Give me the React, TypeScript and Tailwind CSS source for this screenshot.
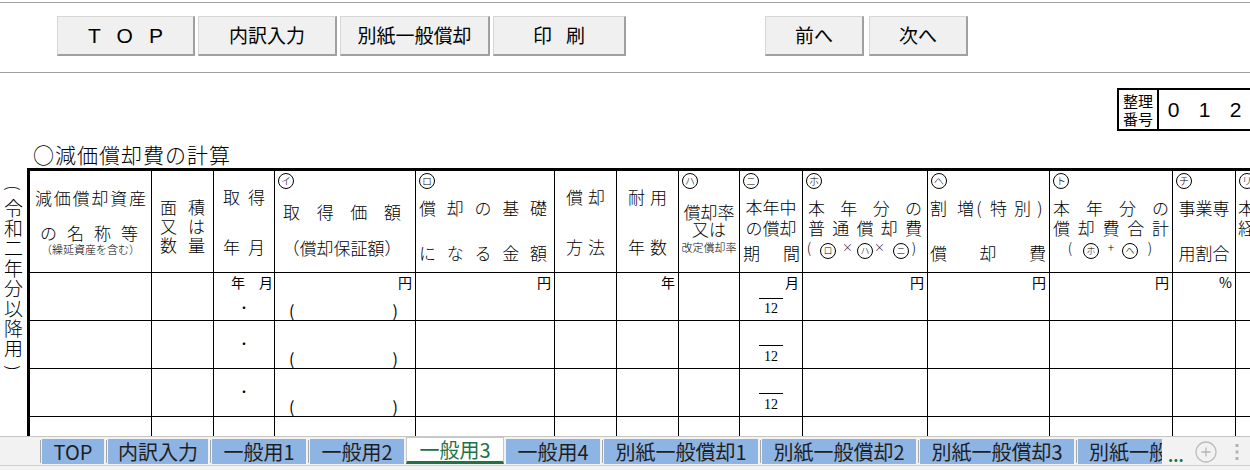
import React from "react";

// column widths (cell width incl. right border)
const COLS = [
  "w-[122px]", "w-[62px]", "w-[61px]", "w-[141px]", "w-[139px]", "w-[62px]", "w-[62px]",
  "w-[61px]", "w-[63px]", "w-[125px]", "w-[122px]", "w-[123px]", "w-[63px]", "w-[60px]",
];

function Spread({ t, className = "" }: { t: string; className?: string }) {
  return (
    <div className={`flex justify-between ${className}`}>
      {Array.from(t).map((c, i) => (
        <span key={i}>{c}</span>
      ))}
    </div>
  );
}

function Maru({ c, small }: { c: string; small?: boolean }) {
  return (
    <span
      className={`inline-flex shrink-0 items-center justify-center rounded-full border border-black leading-none ${
        small ? "h-[16px] w-[16px] text-[9px]" : "h-[16px] w-[16px] text-[10px]"
      }`}
    >
      {c}
    </span>
  );
}

function MaruRow({ c }: { c: string }) {
  return (
    <div className="flex h-[20px] items-start pl-[3px] pt-[2px]">
      <Maru c={c} />
    </div>
  );
}

function Paren({ c }: { c: string }) {
  return <span className="flex w-[6px] justify-center text-[14px] leading-[18px]">{c}</span>;
}

function Btn({ className, children }: { className: string; children: React.ReactNode }) {
  return (
    <div
      className={`flex h-[40px] shrink-0 items-center justify-center border border-[#d6d6d6] border-b-2 border-r-2 border-b-[#a0a0a0] border-r-[#a0a0a0] bg-[#f0f0f0] text-[19px] ${className}`}
    >
      {children}
    </div>
  );
}

function Toolbar() {
  return (
    <div className="flex h-[69px] items-start pt-[13px]">
      <Btn className="ml-[57px] w-[138px]">
        <span className="pl-[16px] font-['Liberation_Sans',sans-serif] text-[21px] tracking-[16px]">TOP</span>
      </Btn>
      <Btn className="ml-[3px] w-[139px]">内訳入力</Btn>
      <Btn className="ml-[3px] w-[150px]">別紙一般償却</Btn>
      <Btn className="ml-[3px] w-[133px]">
        <span className="pl-[14px] tracking-[14px]">印刷</span>
      </Btn>
      <Btn className="ml-[139px] w-[99px]">前へ</Btn>
      <Btn className="ml-[5px] w-[99px]">次へ</Btn>
    </div>
  );
}

function HeaderRow() {
  const cells: React.ReactNode[] = [
    // 減価償却資産の名称等
    <>
      <div className="px-[5px] pt-[17px]">
        <Spread t="減価償却資産" className="leading-[20px]" />
      </div>
      <Spread t="の名称等" className="mt-[16px] pl-[10px] pr-[13px] leading-[18px]" />
      <div className="text-center text-[11px] leading-[14px]">（繰延資産を含む）</div>
    </>,
    // 面積又は数量
    <div className="px-[8px] pt-[26px] leading-[19px]">
      <Spread t="面積" />
      <Spread t="又は" />
      <Spread t="数量" />
    </div>,
    // 取得年月
    <div className="px-[9px] pt-[16px] leading-[20px]">
      <Spread t="取得" />
      <Spread t="年月" className="mt-[30px]" />
    </div>,
    // イ 取得価額
    <>
      <MaruRow c="イ" />
      <Spread t="取得価額" className="mt-[11px] pl-[8px] pr-[14px] leading-[20px]" />
      <div className="mt-[16px] pr-[6px] text-center leading-[20px]">（償却保証額）</div>
    </>,
    // ロ 償却の基礎になる金額
    <>
      <MaruRow c="ロ" />
      <Spread t="償却の基礎" className="mt-[7px] pl-[3px] pr-[7px] leading-[20px]" />
      <Spread t="になる金額" className="mt-[25px] pl-[3px] pr-[7px] leading-[20px]" />
    </>,
    // 償却方法
    <div className="px-[11px] pt-[16px] leading-[20px]">
      <Spread t="償却" />
      <Spread t="方法" className="mt-[30px]" />
    </div>,
    // 耐用年数
    <div className="px-[11px] pt-[16px] leading-[20px]">
      <Spread t="耐用" />
      <Spread t="年数" className="mt-[30px]" />
    </div>,
    // ハ 償却率又は改定償却率
    <>
      <MaruRow c="ハ" />
      <div className="mt-[12px] text-center leading-[18px]">償却率</div>
      <div className="text-center leading-[16px]">又は</div>
      <div className="mt-[3px] text-center text-[11px] leading-[14px]">改定償却率</div>
    </>,
    // ニ 本年中の償却期間
    <>
      <MaruRow c="ニ" />
      <div className="mt-[6px] text-center leading-[20px]">本年中</div>
      <div className="mt-[1px] text-center leading-[20px]">の償却</div>
      <Spread t="期間" className="mt-[5px] pl-[3px] pr-[2px] leading-[20px]" />
    </>,
    // ホ 本年分の普通償却費
    <>
      <MaruRow c="ホ" />
      <Spread t="本年分の" className="mt-[7px] px-[5px] leading-[20px]" />
      <Spread t="普通償却費" className="px-[5px] leading-[20px]" />
      <div className="flex h-[18px] items-center pl-[3px]">
        <Paren c="(" />
        <span className="ml-[8px]"><Maru c="ロ" small /></span>
        <span className="ml-[6px] w-[10px] text-center text-[11px] leading-[18px]">×</span>
        <span className="ml-[5px]"><Maru c="ハ" small /></span>
        <span className="ml-[1px] w-[10px] text-center text-[11px] leading-[18px]">×</span>
        <span className="ml-[9px]"><Maru c="ニ" small /></span>
        <span className="ml-[2px]"><Paren c=")" /></span>
      </div>
    </>,
    // ヘ 割増(特別)償却費
    <>
      <MaruRow c="ヘ" />
      <div className="mt-[7px] flex items-center pl-[2px] leading-[20px]">
        <span>割</span>
        <span className="ml-[10px]">増</span>
        <span className="ml-[1px] flex w-[8px] justify-center">(</span>
        <span className="ml-[7px]">特</span>
        <span className="ml-[7px]">別</span>
        <span className="ml-[5px] flex w-[8px] justify-center">)</span>
      </div>
      <Spread t="償却費" className="mt-[25px] pl-[2px] pr-[3px] leading-[20px]" />
    </>,
    // ト 本年分の償却費合計
    <>
      <MaruRow c="ト" />
      <Spread t="本年分の" className="mt-[7px] px-[3px] leading-[20px]" />
      <Spread t="償却費合計" className="px-[3px] leading-[20px]" />
      <div className="flex h-[18px] items-center pl-[17px]">
        <Paren c="(" />
        <span className="ml-[10px]"><Maru c="ホ" small /></span>
        <span className="ml-[6px] w-[12px] text-center text-[12px] leading-[18px]">+</span>
        <span className="ml-[5px]"><Maru c="ヘ" small /></span>
        <span className="ml-[9px]"><Paren c=")" /></span>
      </div>
    </>,
    // チ 事業専用割合
    <>
      <MaruRow c="チ" />
      <div className="mt-[7px] text-center leading-[20px]">事業専</div>
      <div className="mt-[25px] text-center leading-[20px]">用割合</div>
    </>,
    // リ (cut off at the window edge)
    <>
      <MaruRow c="リ" />
      <div className="mt-[7px] pl-[2px] leading-[20px]">本</div>
      <div className="pl-[2px] leading-[20px]">経</div>
    </>,
  ];
  return (
    <div className="flex h-[102px]">
      {cells.map((c, i) => (
        <div key={i} className={`${COLS[i]} flex shrink-0 flex-col border-b border-r border-black text-[17px] font-light`}>
          {c}
        </div>
      ))}
    </div>
  );
}

function Unit({ u, pr = "pr-[3px]" }: { u: string; pr?: string }) {
  return <div className={`pt-[1px] text-right text-[14px] leading-[16px] ${pr}`}>{u}</div>;
}

function DataRow({ first, empty }: { first?: boolean; empty?: boolean }) {
  const cells: React.ReactNode[] = empty
    ? COLS.map(() => null)
    : [
        null,
        null,
        <>
          {first && <Unit u="年　月" pr="pr-[1px]" />}
          <div className={`${first ? "mt-[12px]" : "pt-[17px]"} text-center text-[12px] leading-[12px]`}>・</div>
        </>,
        <>
          {first && <Unit u="円" />}
          <div className={`${first ? "mt-[12px]" : "pt-[29px]"} flex justify-between pl-[14px] pr-[17px] text-[16px] leading-[16px]`}>
            <span>(</span>
            <span>)</span>
          </div>
        </>,
        first ? <Unit u="円" /> : null,
        null,
        first ? <Unit u="年" /> : null,
        null,
        <>
          {first && <Unit u="月" />}
          <div className={`${first ? "mt-[8px]" : "mt-[24px]"} mx-auto h-px w-[24px] bg-black`} />
          <div className={`${first ? "mt-[2px]" : "mt-[3px]"} text-center font-['Liberation_Serif',serif] text-[14px] leading-[16px]`}>
            12
          </div>
        </>,
        first ? <Unit u="円" /> : null,
        first ? <Unit u="円" /> : null,
        first ? <Unit u="円" /> : null,
        first ? <Unit u="%" /> : null,
        null,
      ];
  return (
    <div className="flex h-[48px]">
      {cells.map((c, i) => (
        <div key={i} className={`${COLS[i]} flex shrink-0 flex-col border-b border-r border-black`}>
          {c}
        </div>
      ))}
    </div>
  );
}

function Sep() {
  return (
    <div className="flex w-[4px] shrink-0 justify-center py-[1px]">
      <div className="w-px bg-[#a8a8a8]" />
    </div>
  );
}

function Tab({ t, w }: { t: string; w: string }) {
  return (
    <div className={`${w} shrink-0 bg-[#8eb4e3] text-center text-[20px] leading-[25px] text-[#1e1e1e]`}>{t}</div>
  );
}

function SheetTabs() {
  return (
    <div className="h-[34px] shrink-0 border-t border-[#c6c6c6] bg-[#f2f2f2]">
      <div className="mt-[2px] flex h-[25px] items-stretch pl-[38px]">
        <Sep />
        <Tab t="TOP" w="w-[62px]" />
        <Sep />
        <Tab t="内訳入力" w="w-[100px]" />
        <Sep />
        <Tab t="一般用1" w="w-[94px]" />
        <Sep />
        <Tab t="一般用2" w="w-[94px]" />
        <div className="w-[2px] shrink-0" />
        <div className="-mt-[2px] h-[27px] w-[98px] shrink-0 border-x border-t border-b-[3px] border-[#c8c8c8] border-b-[#217346] bg-white text-center text-[20px] leading-[23px] text-[#217346]">
          一般用3
        </div>
        <div className="w-[2px] shrink-0" />
        <Tab t="一般用4" w="w-[94px]" />
        <Sep />
        <Tab t="別紙一般償却1" w="w-[154px]" />
        <Sep />
        <Tab t="別紙一般償却2" w="w-[154px]" />
        <Sep />
        <Tab t="別紙一般償却3" w="w-[154px]" />
        <Sep />
        <div className="w-[84px] shrink-0 overflow-hidden whitespace-nowrap bg-[#8eb4e3] pl-[11px] text-[20px] leading-[25px] text-[#1e1e1e]">
          別紙一般
        </div>
        <div className="ml-[6px] flex items-center pt-[6px] text-[16px] font-bold leading-[16px] text-[#217346]">...</div>
        <div className="ml-[11px] flex items-center">
          <svg width="22" height="22" viewBox="0 0 22 22">
            <circle cx="11" cy="11" r="10" fill="none" stroke="#bdbdbd" strokeWidth="1.3" />
            <path d="M11 6.5v9M6.5 11h9" stroke="#b5b5b5" strokeWidth="1.3" />
          </svg>
        </div>
        <div className="ml-[18px] flex items-center">
          <svg width="4" height="18" viewBox="0 0 4 18">
            <rect x="0.5" y="1" width="3" height="3" fill="#b3b3b3" />
            <rect x="0.5" y="7.5" width="3" height="3" fill="#b3b3b3" />
            <rect x="0.5" y="14" width="3" height="3" fill="#b3b3b3" />
          </svg>
        </div>
      </div>
      <div className="mt-[1px] h-px bg-[#d2d2d2]" />
    </div>
  );
}

// vertical note on the left: （令和二年分以降用）
function SideNote() {
  return (
    <div className="flex w-[27px] shrink-0 flex-col items-center pt-[10px] text-[19px] font-light leading-[20px]">
      <span className="flex h-[20px] items-center justify-center">
        <span className="inline-block rotate-90 text-[16px]">(</span>
      </span>
      {Array.from("令和二年分以降用").map((c, i) => (
        <span key={i}>{c}</span>
      ))}
      <span className="flex h-[20px] items-center justify-center">
        <span className="inline-block rotate-90 text-[16px]">)</span>
      </span>
    </div>
  );
}

export default function App() {
  return (
    <div className="flex h-[470px] w-[1250px] flex-col overflow-hidden bg-white font-['Noto_Sans_CJK_JP',sans-serif] text-black">
      <div className="h-[436px] shrink-0 overflow-hidden">
        <div className="h-[2px]" />
        <div className="h-px bg-[#a0a0a0]" />
        <Toolbar />
        <div className="h-px bg-[#a0a0a0]" />
        <div className="flex h-[95px]">
          <div className="self-end pb-[3px] pl-[33px] text-[21px] font-light leading-[22px] tracking-[1px]">
            ○減価償却費の計算
          </div>
          <div className="ml-auto mt-[15px] flex h-[43px] w-[133px] shrink-0 border-2 border-r-0 border-black">
            <div className="flex w-[40px] shrink-0 flex-col items-center justify-center border-r-2 border-black text-[15px] leading-[18px]">
              <span>整理</span>
              <span>番号</span>
            </div>
            <div className="-ml-[1px] flex items-center font-['Liberation_Sans',sans-serif] text-[21px]">
              <span className="w-[31px] text-center">0</span>
              <span className="w-[31px] text-center">1</span>
              <span className="w-[31px] text-center">2</span>
            </div>
          </div>
        </div>
        <div className="flex">
          <SideNote />
          <div className="shrink-0 border-l-[3px] border-t-[3px] border-black">
            <HeaderRow />
            <DataRow first />
            <DataRow />
            <DataRow />
            <DataRow empty />
          </div>
        </div>
      </div>
      <SheetTabs />
    </div>
  );
}
